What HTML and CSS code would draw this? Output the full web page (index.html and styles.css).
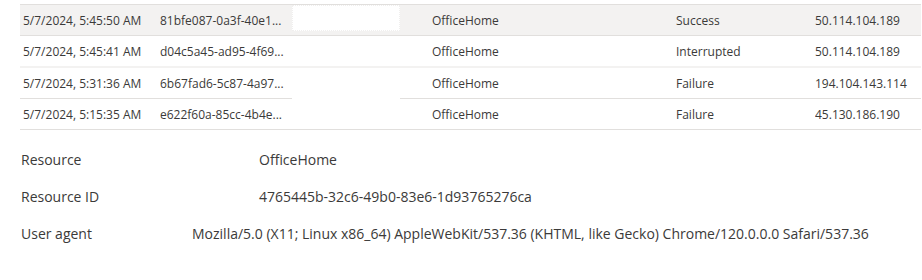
FILE: index.html
```html
<!DOCTYPE html>
<html>
<head>
<meta charset="utf-8">
<link rel="stylesheet" href="styles.css">
</head>
<body>
<div class="page">
  <div class="table">
    <div class="row row-selected">
      <div class="cell c-date">5/7/2024, 5:45:50 AM</div>
      <div class="cell c-id">81bfe087-0a3f-40e1...</div>
      <div class="cell c-blank"><div class="focus-box"></div></div>
      <div class="cell c-res">OfficeHome</div>
      <div class="cell c-status">Success</div>
      <div class="cell c-ip">50.114.104.189</div>
    </div>
    <div class="row row-soft">
      <div class="cell c-date">5/7/2024, 5:45:41 AM</div>
      <div class="cell c-id">d04c5a45-ad95-4f69...</div>
      <div class="cell c-blank"></div>
      <div class="cell c-res">OfficeHome</div>
      <div class="cell c-status">Interrupted</div>
      <div class="cell c-ip">50.114.104.189</div>
    </div>
    <div class="row row-gap">
      <div class="cell c-date">5/7/2024, 5:31:36 AM</div>
      <div class="cell c-id">6b67fad6-5c87-4a97...</div>
      <div class="cell c-blank"></div>
      <div class="cell c-res">OfficeHome</div>
      <div class="cell c-status">Failure</div>
      <div class="cell c-ip">194.104.143.114</div>
    </div>
    <div class="row">
      <div class="cell c-date">5/7/2024, 5:15:35 AM</div>
      <div class="cell c-id">e622f60a-85cc-4b4e...</div>
      <div class="cell c-blank"></div>
      <div class="cell c-res">OfficeHome</div>
      <div class="cell c-status">Failure</div>
      <div class="cell c-ip">45.130.186.190</div>
    </div>
  </div>

  <div class="details">
    <div class="detail">
      <div class="d-label">Resource</div>
      <div class="d-value">OfficeHome</div>
    </div>
    <div class="detail">
      <div class="d-label">Resource ID</div>
      <div class="d-value">4765445b-32c6-49b0-83e6-1d93765276ca</div>
    </div>
    <div class="detail">
      <div class="d-label">User agent</div>
      <div class="d-value d-wide">Mozilla/5.0 (X11; Linux x86_64) AppleWebKit/537.36 (KHTML, like Gecko) Chrome/120.0.0.0 Safari/537.36</div>
    </div>
  </div>
</div>
</body>
</html>
```

FILE: styles.css
```css
html, body {
  margin: 0;
  padding: 0;
  background: #ffffff;
}

.page {
  padding: 4px 1px 0 20px;
  font-family: "Open Sans", "Noto Sans", sans-serif;
  color: #3b3a39;
}

.table {
  border-top: 1px solid #e1dfdd;
}

.row {
  display: grid;
  grid-template-columns: 140px 132px 108px 276px 139px 1fr;
  font-size: 12px;
}

.cell {
  height: 30px;
  line-height: 31px;
  border-bottom: 1px solid #e1dfdd;
  white-space: nowrap;
  overflow: hidden;
}

.c-date { padding-left: 3px; }
.c-res { padding-left: 32px; }

.row-selected .cell {
  background: #f3f2f1;
}

.row-selected .c-blank {
  padding: 0;
}

.focus-box {
  height: 26px;
  background: #ffffff;
  box-sizing: border-box;
  border: 1px dotted #f0efee;
}

.row-soft .cell {
  border-bottom: 2px solid #f3f2f1;
}

.row-gap .c-blank {
  border-bottom-color: #ffffff;
}

.details {
  padding-top: 11px;
  font-size: 14px;
}

.detail {
  display: flex;
  height: 37px;
  align-items: center;
}

.d-label {
  width: 238px;
  padding-left: 1px;
}

.d-wide {
  margin-left: -67px;
}
```
